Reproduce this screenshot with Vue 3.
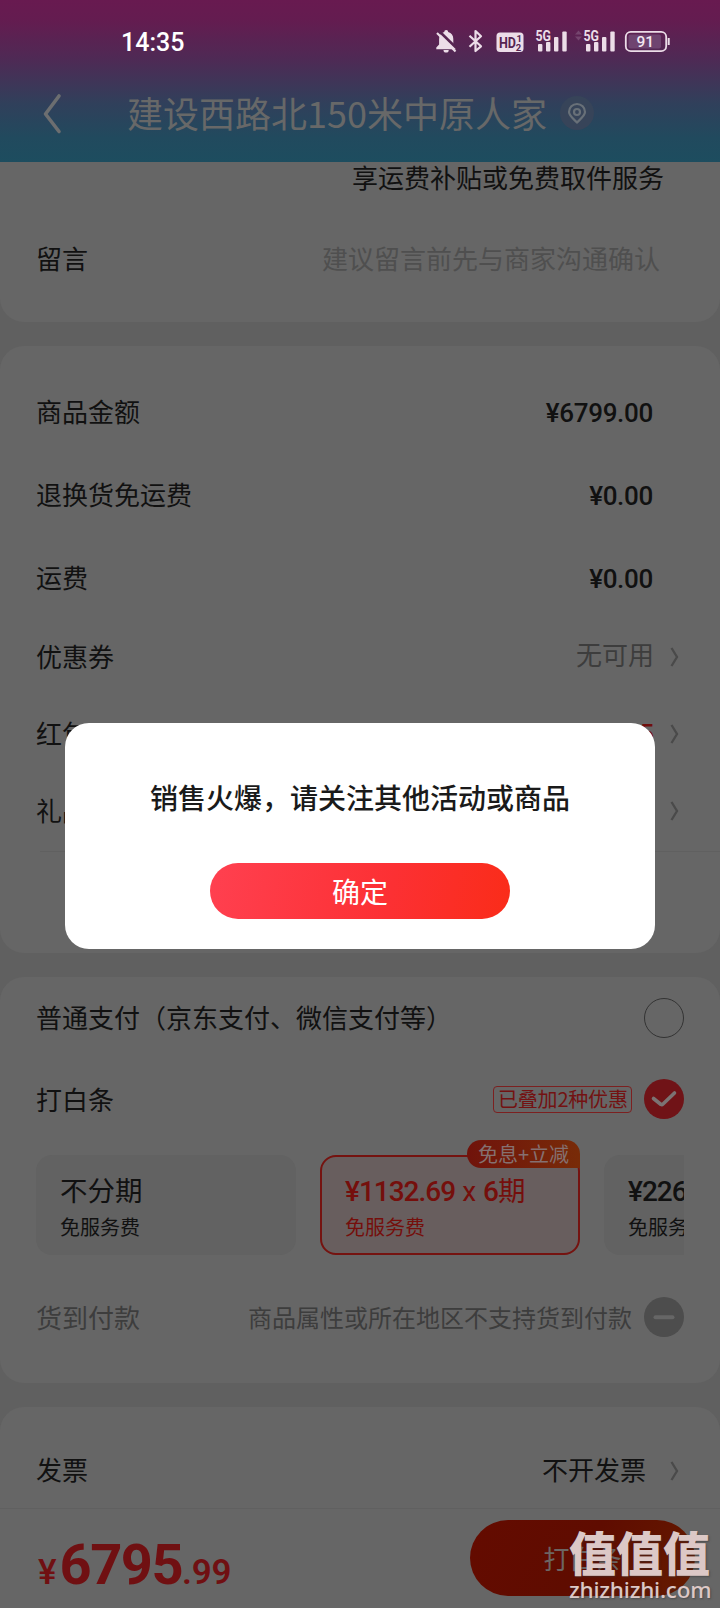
<script setup>
const amounts = [
  { label: '商品金额', value: '¥6799.00' },
  { label: '退换货免运费', value: '¥0.00' },
  { label: '运费', value: '¥0.00' },
]
const benefits = [
  { label: '优惠券', value: '无可用', kind: 'muted' },
  { label: '红包', value: '5', kind: 'red' },
  { label: '礼品卡', value: '', kind: 'muted' },
]
const signals = [0, 48]
</script>

<template>
  <div class="screen">
    <header class="top">
      <div class="status">
        <span class="clock">14:35</span>
        <svg class="status-icons" viewBox="430 24 246 34" width="246" height="34">
          <g fill="#ecdde8">
            <path d="M446.200 30a2 2 0 0 1 2 2c3.300.9 5.100 3.600 5.100 7v5.500l2.700 3.100v1.600h-19.700v-1.600l2.800-3.100V39c0-3.400 1.800-6.100 5.100-7a2 2 0 0 1 2-2z" />
            <path d="M443.500 50h5.200a2.600 2.600 0 0 1-5.200 0z" />
          </g>
          <path d="M439 31L457.500 49" stroke="#562551" stroke-width="2.500" />
          <path d="M437 33L455.500 51.500" stroke="#ecdde8" stroke-width="2.200" />
          <path d="M469.500 35.700L481 46.300L475.500 51V31L481 36.300L469.500 46.800" fill="none" stroke="#ecdde8" stroke-width="2.200" stroke-linejoin="round" />
          <rect x="496.500" y="32.500" width="27" height="19.500" rx="3.500" fill="#ecdde8" />
          <g fill="#562551" class="sans heavy">
            <text x="499" y="47.500" font-size="15" textLength="17" lengthAdjust="spacingAndGlyphs">HD</text>
            <text x="516.500" y="41.500" font-size="9.500">1</text>
            <text x="515.800" y="50.500" font-size="9.500">2</text>
          </g>
          <g v-for="dx in signals" :key="dx" :transform="`translate(${dx} 0)`" fill="#ecdde8">
            <text x="535.500" y="40.500" font-size="14.500" class="sans heavy" textLength="15.500" lengthAdjust="spacingAndGlyphs">5G</text>
            <rect x="538" y="44" width="4.400" height="7.500" rx="1" />
            <rect x="546" y="42" width="4.400" height="9.500" rx="1" />
            <rect x="554" y="37" width="4.400" height="14.500" rx="1" />
            <rect x="562.300" y="31.500" width="4.400" height="20" rx="1" />
          </g>
          <path d="M575 34.500l3.500-4 3.500 4zM575 36.500h7l-3.500 4z" fill="#75456f" />
          <rect x="625.800" y="31.800" width="40.400" height="19.400" rx="5" fill="none" stroke="#ecdde8" stroke-width="1.800" />
          <rect x="628.500" y="34.500" width="32.500" height="14" rx="2" fill="#6f4470" />
          <path d="M668.700 38v7" stroke="#ecdde8" stroke-width="2" />
          <text x="636.500" y="47.200" font-size="15.500" fill="#f3e8f0" class="sans mid">91</text>
        </svg>
      </div>
      <div class="nav">
        <svg class="back" width="20" height="42" viewBox="0 0 20 42"><path d="M17 3L3.500 21L17 38.500" fill="none" stroke="#6c6e70" stroke-width="3.600" stroke-linecap="round" stroke-linejoin="round" /></svg>
        <h1>建设西路北150米中原人家</h1>
        <svg class="pin" width="34" height="34" viewBox="0 0 34 34">
          <circle cx="17" cy="17" r="17" fill="#374459" />
          <path d="M17 26.500C13 22.500 9 19.500 9 16a8 8 0 0 1 16 0c0 3.500-4 6.500-8 10.500z" fill="none" stroke="#687078" stroke-width="2.200" />
          <circle cx="17" cy="16" r="3" fill="none" stroke="#687078" stroke-width="2.200" />
        </svg>
      </div>
    </header>

    <section class="card first">
      <p class="note">享运费补贴或免费取件服务</p>
      <div class="row message"><span>留言</span><span class="placeholder">建议留言前先与商家沟通确认</span></div>
    </section>

    <section class="card totals">
      <div v-for="a in amounts" :key="a.label" class="row amount">
        <span>{{ a.label }}</span><span class="price">{{ a.value }}</span>
      </div>
      <div v-for="b in benefits" :key="b.label" class="row benefit">
        <span>{{ b.label }}</span>
        <span class="value" :class="b.kind">{{ b.value }}</span>
        <svg class="chev" width="9" height="20" viewBox="0 0 9 20"><path d="M1.500 1L7 10L1.500 19" fill="none" stroke="#4a4a4a" stroke-width="2.300" /></svg>
      </div>
      <div class="rule"></div>
    </section>

    <section class="card pay">
      <div class="row method"><span>普通支付（京东支付、微信支付等）</span><i class="radio"></i></div>
      <div class="row method">
        <span>打白条</span>
        <span class="stack">已叠加2种优惠</span>
        <svg class="mark" width="40" height="40" viewBox="0 0 40 40"><circle cx="20" cy="20" r="20" fill="#701317" /><path d="M9.500 19.500L17 25.500Q18 26 19 25L30.500 14" fill="none" stroke="#7b7373" stroke-width="3.600" stroke-linecap="round" stroke-linejoin="round" /></svg>
      </div>
      <div class="plans">
        <div class="plan"><b class="cn">不分期</b><small>免服务费</small></div>
        <div class="plan on">
          <em>免息+立减</em>
          <b><span>¥1132.69</span><span class="times">x</span><span>6</span><span class="cn">期</span></b><small>免服务费</small>
        </div>
        <div class="plan"><b><span>¥2265.38</span></b><small>免服务费</small></div>
      </div>
      <div class="row cod">
        <span>货到付款</span><span class="reason">商品属性或所在地区不支持货到付款</span>
        <svg class="mark" width="40" height="40" viewBox="0 0 40 40"><circle cx="20" cy="20" r="20" fill="#4d4d4d" /><path d="M11.500 20.300H28.500" stroke="#666" stroke-width="4" stroke-linecap="round" /></svg>
      </div>
    </section>

    <section class="card bill">
      <div class="row invoice">
        <span>发票</span><span class="value">不开发票</span>
        <svg class="chev" width="9" height="20" viewBox="0 0 9 20"><path d="M1.500 1L7 10L1.500 19" fill="none" stroke="#4a4a4a" stroke-width="2.300" /></svg>
      </div>
    </section>

    <footer class="bar">
      <div class="sum"><span class="yen">¥</span><span class="big">6795</span><span class="cents">.99</span></div>
      <div class="submit">打白条</div>
    </footer>

    <div class="dialog">
      <p>销售火爆，请关注其他活动或商品</p>
      <button>确定</button>
    </div>

    <div class="watermark"><strong>值值值</strong><span>zhizhizhi.com</span></div>
  </div>
</template>

<style>
body { margin: 0; background: #606060; }
</style>

<style scoped>
.screen {
  position: relative;
  width: 720px;
  height: 1608px;
  overflow: hidden;
  display: flex;
  flex-direction: column;
  background: #606060;
  color: #111;
  font: 26px/1.2 "Noto Sans CJK SC", sans-serif;
}
.screen p, .screen h1 { margin: 0; }
.sans { font-family: Roboto, sans-serif; }
.heavy { font-weight: 700; }
.mid { font-weight: 500; }
.top {
  height: 162px;
  flex: none;
  background: linear-gradient(#681a50 0, #641c50 20px, #4e2a55 60px, #30405b 104px, #214a5e 138px, #1d4d5f 162px);
}
.status { height: 82px; display: flex; align-items: center; justify-content: space-between; padding: 0 44px 0 121px; }
.clock { font: 500 25px/30px Roboto, sans-serif; color: #fff; padding-top: 3px; }
.nav { height: 64px; display: flex; align-items: center; padding-left: 42px; }
.back { flex: none; }
.screen h1 { padding: 0 13px 4px 65px; font-size: 36px; font-weight: 400; line-height: 46px; color: #676868; white-space: nowrap; }
.pin { flex: none; margin-bottom: 2px; }
.card { flex: none; box-sizing: border-box; background: #666; border-radius: 24px; margin-bottom: 24px; }
.row { display: flex; align-items: center; justify-content: space-between; padding: 0 36px; box-sizing: border-box; white-space: nowrap; }
.row > span:first-child { padding-bottom: 3px; }
.first { height: 160px; border-radius: 0 0 24px 24px; }
.note { text-align: right; padding: 0 56px 0 0; height: 58px; line-height: 30px; box-sizing: border-box; }
.message { height: 78px; }
.placeholder { color: #4f4f4f; margin-right: 24px; padding-bottom: 3px; }
.totals { height: 607px; padding-top: 25px; }
.amount { height: 83px; }
.price { font: 500 26px/30px Roboto, sans-serif; letter-spacing: -.3px; margin-right: 31px; }
.benefit { height: 77px; padding-bottom: 3px; }
.value { margin-left: auto; }
.benefit .value { margin-right: 16px; }
.benefit .muted { color: #3d3d3d; padding-bottom: 6px; }
.benefit .red { color: #700f0d; font: 500 26px/30px Roboto, sans-serif; }
.chev { flex: none; margin-right: 5px; }
.rule { height: 1px; margin: 0 0 0 40px; background: #606060; }
.pay { height: 406px; }
.method { height: 82px; }
.method .mark { margin-bottom: 2px; }
.radio { box-sizing: border-box; width: 40px; height: 40px; border: 1px solid #333; border-radius: 50%; }
.stack { margin-left: auto; margin-right: 12px; box-sizing: border-box; width: 139px; height: 27px; border: 1px solid #7c2020; border-radius: 4px; padding: 0 4px; font-size: 20px; letter-spacing: -.2px; line-height: 23px; color: #731212; margin-bottom: 2px; }
.mark { flex: none; }
.plans { display: flex; gap: 24px; margin: -4px 36px 0; padding-top: 18px; overflow: hidden; }
.plan { position: relative; flex: none; box-sizing: border-box; width: 260px; height: 100px; border-radius: 16px; background: #626262; padding: 18px 0 0 24px; display: flex; flex-direction: column; }
.plan b { height: 36px; font: 500 28px/36px Roboto, sans-serif; letter-spacing: -1px; display: flex; align-items: center; }
.plan b span { padding-top: 1px; }
.plan b .cn, .plan b.cn { font: 400 27.500px/33px "Noto Sans CJK SC", sans-serif; letter-spacing: 0; padding: 0 0 3px; box-sizing: border-box; }
.plan b .times { font-weight: 400; margin: 0 8px 0 7px; }
.plan small { font-size: 20px; line-height: 36px; }
.on { background: #685e5e; border: 2px solid #751310; padding: 16px 0 0 23px; color: #750f0c; }
.on em { position: absolute; right: -2px; top: -17px; width: 113px; height: 28px; border-radius: 14px 14px 0 14px; background: linear-gradient(90deg, #70130b, #782b08); font-style: normal; font-size: 20px; line-height: 28px; text-align: center; color: #857070; }
.cod { height: 126px; color: #3d3d3d; }
.cod .mark { margin-bottom: 2px; }
.reason { margin-left: auto; margin-right: 12px; padding-bottom: 2px; font-size: 24px; }
.bill { height: 101px; margin-bottom: 0; border-radius: 24px 24px 0 0; overflow: hidden; }
.invoice { height: 127px; }
.invoice .value { margin-right: 24px; padding-bottom: 3px; }
.bar { flex: none; height: 100px; box-sizing: border-box; border-top: 1px solid #606060; background: #666; display: flex; justify-content: space-between; align-items: flex-start; padding: 11px 25px 0 38px; }
.sum { display: flex; align-items: baseline; color: #701012; font-family: Roboto, sans-serif; font-weight: 700; line-height: 90px; }
.yen { font-size: 35px; font-weight: 500; margin-right: 3px; }
.big { font-size: 56px; letter-spacing: -1.500px; }
.cents { font-size: 35px; font-weight: 600; letter-spacing: -.3px; }
.submit { width: 225px; height: 76px; border-radius: 38px; background: linear-gradient(120deg, #640b00, #5f0c00 50%, #651c00); color: #6c6563; font-size: 26px; line-height: 76px; text-align: center; }
.dialog { position: absolute; left: 65px; top: 723px; width: 590px; height: 226px; border-radius: 24px; background: #fff; display: flex; flex-direction: column; align-items: center; }
.screen .dialog p { font-size: 28px; font-weight: 500; line-height: 40px; color: #1a1a1a; margin-top: 54px; white-space: nowrap; }
.dialog button { margin-top: 46px; width: 300px; height: 56px; border: 0; border-radius: 28px; padding: 0; background: linear-gradient(100deg, #ff4050, #fc3033 60%, #fa2c19); color: #fff; font: 28px/54px "Noto Sans CJK SC", sans-serif; }
.watermark { position: absolute; left: 569px; top: 1525px; width: 144px; display: flex; flex-direction: column; color: #dcc8c6; text-shadow: 1px 1px 2px #3338; }
.watermark strong { font-size: 47px; font-weight: 900; line-height: 51px; white-space: nowrap; }
.watermark span { font: 500 22.500px/27px "Noto Sans", sans-serif; letter-spacing: -.2px; white-space: nowrap; }
</style>
